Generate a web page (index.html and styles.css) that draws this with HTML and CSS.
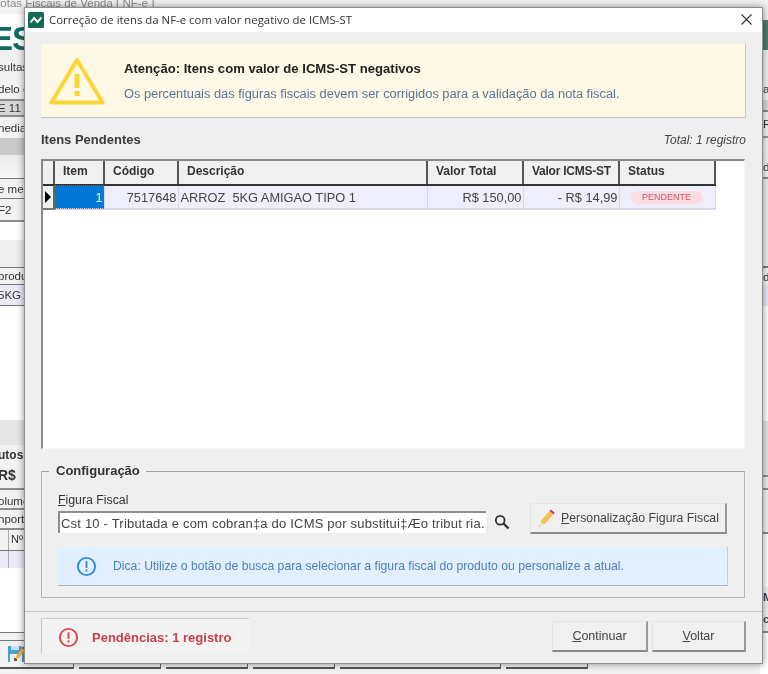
FILE: index.html
```html
<!DOCTYPE html>
<html lang="pt-BR">
<head>
<meta charset="utf-8">
<title>Correção de itens da NF-e</title>
<link rel="stylesheet" href="styles.css">
</head>
<body>
<div class="desktop">
  <div class="back-title">Notas Fiscais de Venda [ NF-e ]</div>

  <div class="taskbar">
    <span class="tb tb1"></span><span class="tb tb2"></span><span class="tb tb2"></span><span class="tb tb2"></span><span class="tb tb3"></span><span class="tb tb2"></span>
  </div>

  <div class="strip strip-left">
    <div class="s s-logo"><span class="logo-text">ES</span></div>
    <div class="s s-gap"></div>
    <div class="s s-txt h24">sultas</div>
    <div class="s s-txt h22 line">delo e</div>
    <div class="s s-txt h16 tinted line">E 11</div>
    <div class="s s-txt h21">nediac</div>
    <div class="s s-dark"></div>
    <div class="s h23 grad"></div>
    <div class="s s-txt h20 line-t">e mer</div>
    <div class="s s-txt h24 line-t line">F2</div>
    <div class="s h18 white"></div>
    <div class="s h28 soft line-b"></div>
    <div class="s s-txt h16">produ</div>
    <div class="s s-txt h21 lav line-t">5KG A</div>
    <div class="s h115 white line-t"></div>
    <div class="s h25 soft2"></div>
    <div class="s s-txt h20 bold">utos</div>
    <div class="s s-txt h25 bold big line">R$</div>
    <div class="s s-txt h20 line pad-top">olume</div>
    <div class="s s-txt h20 line">nporta</div>
    <div class="s s-cells h20"><span class="cell-a"></span><span class="cell-b">Nº</span></div>
    <div class="s s-cells lav h18 line-t"><span class="cell-a cell-lav"></span><span class="cell-b cell-lav"></span></div>
    <div class="s h64 white"></div>
    <div class="s h8 pale line-t"></div>
    <div class="s h24 tool line-t">
      <svg class="save" viewBox="0 0 18 18" aria-hidden="true">
        <path d="M0 1h13l3 3v13H0z" fill="#4a9fd8"/>
        <rect x="3" y="1" width="8" height="4" fill="#bfe0f5"/>
        <rect x="2" y="9" width="12" height="8" fill="#f3f0e6"/>
        <rect x="6" y="13" width="3" height="3" fill="#555"/>
        <path d="M8 11l6-8 3 2-6 8-3 1z" fill="#f0b83c"/>
        <path d="M14 3l1-1.500 3 2-1 1.500z" fill="#c8334a"/>
      </svg>
    </div>
  </div>

  <div class="strip strip-right">
    <div class="r h20 pale"></div>
    <div class="r h30 teal"></div>
    <div class="r h28 pale"></div>
    <div class="r r-txt h22">a</div>
    <div class="r h12 tinted line"></div>
    <div class="r r-txt h24">R</div>
    <div class="r h20 boxed"></div>
    <div class="r r-txt h23 line">d</div>
    <div class="r h88 soft line-b"></div>
    <div class="r r-txt h19 line-t">de</div>
    <div class="r h20 lav"></div>
    <div class="r h115 white"></div>
    <div class="r h56 soft2 line"></div>
    <div class="r h13 soft line"></div>
    <div class="r h44 pale line"></div>
    <div class="r h53 white"></div>
    <div class="r r-txt h20 strong">M</div>
    <div class="r r-txt h26 strong line">c</div>
    <div class="r h41 white"></div>
  </div>

  <section class="dialog">
    <header class="titlebar">
      <svg class="appicon" viewBox="0 0 16 16" aria-hidden="true">
        <rect width="16" height="16" rx="1.5" fill="#0f6b56"/>
        <path d="M2.500 10.500 6 6l3.500 4L13.500 5.500" fill="none" stroke="#fff" stroke-width="2"/>
      </svg>
      <span class="title">Correção de itens da NF-e com valor negativo de ICMS-ST</span>
      <svg class="close" viewBox="0 0 11 11" aria-hidden="true"><path d="M.5.5l10 10M10.500.5l-10 10" stroke="#333" stroke-width="1.100"/></svg>
    </header>

    <div class="content">
      <div class="banner">
        <svg class="warn" viewBox="0 0 56 48" aria-hidden="true">
          <path d="M28 3 53.500 45.500H2.500z" fill="none" stroke="#fdd636" stroke-width="4" stroke-linejoin="round"/>
          <rect x="25.500" y="17" width="5" height="14" fill="#fdd636"/>
          <rect x="25.500" y="34" width="5" height="5" fill="#fdd636"/>
        </svg>
        <div class="banner-text">
          <strong class="banner-title">Atenção: Itens com valor de ICMS-ST negativos</strong>
          <span class="banner-sub">Os percentuais das figuras fiscais devem ser corrigidos para a validação da nota fiscal.</span>
        </div>
      </div>

      <div class="section-head">
        <strong>Itens Pendentes</strong>
        <em>Total: 1 registro</em>
      </div>

      <div class="grid">
        <table>
          <colgroup>
            <col class="c0"><col class="c1"><col class="c2"><col class="c3"><col class="c4"><col class="c5"><col class="c6">
          </colgroup>
          <thead>
            <tr><th></th><th>Item</th><th>Código</th><th>Descrição</th><th>Valor Total</th><th class="tight">Valor ICMS-ST</th><th>Status</th></tr>
          </thead>
          <tbody>
            <tr>
              <td class="ind"><span class="arrow"></span></td>
              <td class="num sel">1</td>
              <td class="num">7517648</td>
              <td>ARROZ&nbsp; 5KG AMIGAO TIPO 1</td>
              <td class="num">R$ 150,00</td>
              <td class="num">- R$ 14,99</td>
              <td class="stat"><span class="pill">PENDENTE</span></td>
            </tr>
          </tbody>
        </table>
      </div>

      <fieldset class="config">
        <legend>Configuração</legend>
        <div class="field-row">
          <div class="field">
            <label class="field-label" for="ff"><u>F</u>igura Fiscal</label>
            <input id="ff" class="input" type="text" value="Cst 10 - Tributada e com cobran‡a do ICMS por substitui‡Æo tribut ria.">
          </div>
          <svg class="search" viewBox="0 0 16 16" aria-hidden="true">
            <circle cx="6.200" cy="6.200" r="4.400" fill="none" stroke="#333" stroke-width="1.800"/>
            <path d="M9.500 9.500l5 5" stroke="#333" stroke-width="2.400"/>
          </svg>
          <button class="btn btn-pers" type="button">
            <svg class="pencil" viewBox="0 0 18 18" aria-hidden="true">
              <path d="M2.500 12.500 11.500 2l4 3.200L6.300 15.500z" fill="#f4c04e"/>
              <path d="M11.500 2l1.200-1.400 4 3.200-1.200 1.400z" fill="#c9344a"/>
              <path d="M2.500 12.500l3.800 3-4.600 2z" fill="#f3dfbc"/>
              <path d="M.8 17.800l.9-.3-.2-1z" fill="#333"/>
            </svg>
            <span><u>P</u>ersonalização Figura Fiscal</span>
          </button>
        </div>
        <div class="tip">
          <svg class="info" viewBox="0 0 22 22" aria-hidden="true">
            <circle cx="11" cy="11" r="9" fill="none" stroke="#2f8be6" stroke-width="2"/>
            <rect x="10" y="5.500" width="2" height="7" fill="#2f8be6"/>
            <rect x="10" y="14" width="2" height="2.200" fill="#2f8be6"/>
          </svg>
          <span>Dica: Utilize o botão de busca para selecionar a figura fiscal do produto ou personalize a atual.</span>
        </div>
      </fieldset>
    </div>

    <footer class="footer">
      <div class="pending">
        <svg class="err" viewBox="0 0 22 22" aria-hidden="true">
          <circle cx="11" cy="11" r="9" fill="none" stroke="#e0474c" stroke-width="2"/>
          <rect x="10" y="5.500" width="2" height="7" fill="#e0474c"/>
          <rect x="10" y="14" width="2" height="2.200" fill="#e0474c"/>
        </svg>
        <strong>Pendências: 1 registro</strong>
      </div>
      <div class="actions">
        <button class="btn btn-act" type="button"><span><u>C</u>ontinuar</span></button>
        <button class="btn btn-act" type="button"><span><u>V</u>oltar</span></button>
      </div>
    </footer>
  </section>
</div>
</body>
</html>
```

FILE: styles.css
```css
* { box-sizing: border-box; }
html, body { margin: 0; height: 100%; overflow: hidden; }
body { font-family: "Liberation Sans", Arial, sans-serif; font-size: 12px; color: #333; background: #f0f0f0; }

.desktop { position: relative; width: 768px; height: 674px; overflow: hidden; filter: blur(0.4px); background: #f2f2f2; }

/* window behind the dialog */
.back-title { position: absolute; left: -8px; top: -3px; font-size: 11.500px; color: #8c8c8c; white-space: nowrap; }
.strip { position: absolute; top: 14px; display: flex; flex-direction: column; overflow: hidden; color: #333; }
.strip-left { left: 0; width: 26px; height: 650px; }
.strip-right { left: 760px; top: 0; width: 8px; height: 674px; }
.s, .r { flex: none; white-space: nowrap; overflow: hidden; }
.s-txt, .r-txt { display: flex; align-items: center; font-size: 11.500px; }
.s-txt { text-indent: -2px; }
.r-txt { padding-left: 3px; }
.pad-top { padding-top: 4px; }
.s-logo { height: 36px; background: #fff; display: flex; align-items: center; padding-top: 12px; }
.logo-text { font-size: 33px; font-weight: 700; margin-left: -9px; letter-spacing: -1px; line-height: 1; color: #0f6a64; }
.s-gap { height: 5px; background: #f0f0f0; }
.s-dark { height: 17px; background: #c9c9c9; }
.h8 { height: 8px; } .h12 { height: 12px; } .h13 { height: 13px; } .h16 { height: 16px; }
.h18 { height: 18px; } .h19 { height: 19px; } .h20 { height: 20px; } .h21 { height: 21px; }
.h22 { height: 22px; } .h23 { height: 23px; } .h24 { height: 24px; } .h25 { height: 25px; } .h26 { height: 26px; }
.h28 { height: 28px; } .h30 { height: 30px; } .h41 { height: 41px; }
.h44 { height: 44px; } .h53 { height: 53px; } .h56 { height: 56px; } .h64 { height: 64px; } .h88 { height: 88px; } .h115 { height: 115px; }
.line { border-bottom: 2px solid #8d8d8d; }
.line-t { border-top: 1px solid #777; }
.line-b { border-bottom: 1px solid #777; }
.tinted { background: #d9d9d9; }
.grad { background: linear-gradient(#ececec, #f6f6f6); }
.white { background: #fff; }
.soft { background: #eeeeee; }
.soft2 { background: #e6e6e6; }
.pale { background: #f2f2f2; }
.lav { background: #e9e9f8; }
.teal { background: #4e7a6c; }
.boxed { background: #f4f4f4; border-left: 2px solid #777; border-top: 2px solid #999; }
.bold { font-weight: 700; font-size: 12px; }
.big { font-size: 14px; padding-bottom: 4px; }
.strong { font-weight: 700; color: #445; }
.s-cells { display: flex; }
.cell-a { width: 9px; border-right: 1px solid #aaa; }
.cell-b { width: 17px; padding: 3px 0 0 2px; font-size: 11px; }
.tool { background: transparent; padding: 4px 0 0 8px; }
.save { display: block; width: 18px; height: 18px; }

.taskbar { position: absolute; left: 0; top: 660px; width: 768px; height: 14px; display: flex; gap: 5px; }
.tb { display: block; height: 9px; border-right: 1px solid #666; border-bottom: 2px solid #555; }
.tb1 { width: 74px; }
.tb2 { width: 82px; }
.tb3 { width: 161px; }

/* dialog */
.dialog { position: absolute; left: 24px; top: 7px; width: 739px; height: 657px; display: flex; flex-direction: column; background: #efefef; border: 1px solid #8f8f8f; box-shadow: 0 0 7px rgba(0,0,0,.45); }
.titlebar { flex: none; height: 24px; display: flex; align-items: center; background: #fff; padding: 0 10px 1px 3px; gap: 5px; }
.appicon { width: 16px; height: 16px; flex: none; }
.title { flex: 1; font-family: "Open Sans", sans-serif; font-size: 11.400px; color: #333; white-space: nowrap; }
.close { width: 11px; height: 11px; flex: none; }

.content { flex: 1; display: flex; flex-direction: column; padding: 12px 16px 0; min-height: 0; }
.banner { flex: none; height: 74px; display: flex; align-items: center; gap: 19px; padding: 0 0 0 8px; background: #fef8e6; border-right: 1px solid #c8c8c8; border-bottom: 1px solid #c4c4c4; }
.warn { width: 56px; height: 48px; flex: none; }
.banner-text { display: flex; flex-direction: column; gap: 10px; }
.banner-title { font-size: 13.100px; color: #222; }
.banner-sub { font-size: 12.850px; color: #5b7397; }

.section-head { flex: none; height: 41px; display: flex; justify-content: space-between; align-items: center; padding-top: 2px; }
.section-head strong { font-size: 13px; color: #3a3a3a; }
.section-head em { font-size: 12px; color: #444; }

.grid { flex: none; width: 704px; height: 290px; background: #fff; border-top: 2px solid #8a8a8a; border-left: 2px solid #8a8a8a; border-right: 1px solid #f6f6f6; border-bottom: 1px solid #f6f6f6; }
table { table-layout: fixed; border-collapse: collapse; width: 672px; }
.c0 { width: 11px; } .c1 { width: 50px; } .c2 { width: 74px; } .c3 { width: 249px; } .c4 { width: 96px; } .c5 { width: 96px; } .c6 { width: 96px; }
th { height: 24px; padding: 0 0 3px 8px; text-align: left; font-size: 12px; font-weight: 700; background: #f0f0f0; color: #333; border-right: 2px solid #555; border-bottom: 2px solid #333; white-space: nowrap; }
.tight { letter-spacing: -.25px; }
td { height: 24px; padding: 0 2px; font-size: 12.800px; background: #eeeefc; color: #444; border-right: 1px solid #d8d8e8; border-bottom: 2px solid #d8d8e4; white-space: nowrap; overflow: hidden; }
.num { text-align: right; padding-right: 1px; }
.sel { background: #0078d7; color: #e8f2fb; outline: 1px dotted #5b7a3a; outline-offset: -1px; }
.ind { padding: 0; background: #f0f0f0; border-right: 2px solid #666; border-bottom: 2px solid #777; }
.arrow { display: block; width: 0; height: 0; margin-left: 2px; border-left: 6px solid #000; border-top: 6px solid transparent; border-bottom: 6px solid transparent; }
.stat { padding-left: 11px; }
.pill { display: block; width: 72px; height: 13px; line-height: 13px; text-align: center; border-radius: 7px; background: #fbdde1; color: #d9536a; font-size: 9px; }

.config { flex: none; margin: 14px 1px 0 0; padding: 11px 16px 0; height: 135px; border: 1px solid #b5b5b5; border-top-color: #a0a0a0; min-width: 0; }
.config legend { padding: 0 6px 0 7px; margin-left: -9px; font-size: 13px; font-weight: 700; color: #333; line-height: 16px; }
.field-row { display: flex; align-items: flex-end; height: 43px; }
.field { display: flex; flex-direction: column; width: 428px; gap: 4px; }
.field-label { font-size: 12.300px; color: #333; line-height: 14px; }
.input { width: 428px; height: 22px; padding: 0 0 0 1px; border: 0; border-top: 2px solid #8e8e8e; border-left: 2px solid #8e8e8e; background: #fff; font: 13px "Liberation Sans", Arial, sans-serif; letter-spacing: .2px; color: #444; }
.search { width: 16px; height: 16px; margin: 0 0 3px 8px; flex: none; }
.btn { display: inline-flex; align-items: center; justify-content: center; font: 12.300px "Liberation Sans", Arial, sans-serif; color: #444; background: #f0f0f0; border: 1px solid #e4e4e4; border-right: 2px solid #999; border-bottom: 2px solid #8a8a8a; padding: 0; }
.btn-pers { width: 197px; height: 31px; margin: 0 0 -1px 20px; gap: 5px; padding-left: 1px; }
.pencil { width: 18px; height: 18px; flex: none; }
.tip { height: 39px; margin-top: 14px; display: flex; align-items: center; gap: 16px; padding-left: 18px; background: #e1f0fc; border-bottom: 1px solid #a8b4c0; border-right: 1px solid #c0ccd8; font-size: 12.200px; color: #4a7fc4; }
.info { width: 21px; height: 21px; flex: none; }

.footer { flex: none; height: 52px; border-top: 1px solid #c6c6c6; display: flex; justify-content: space-between; align-items: flex-start; padding: 6px 16px 0; }
.pending { width: 208px; height: 35px; display: flex; align-items: center; gap: 13px; padding: 2px 0 0 16px; background: #f3f3f3; border-top: 1px solid #cfcfcf; border-left: 1px solid #c4c4c4; }
.pending strong { font-size: 13px; color: #c9404c; }
.err { width: 21px; height: 21px; flex: none; }
.actions { display: flex; gap: 4px; margin-top: 3px; }
.btn-act { width: 96px; height: 31px; font-size: 12.500px; }
.btn-act + .btn-act { width: 94px; }
```
